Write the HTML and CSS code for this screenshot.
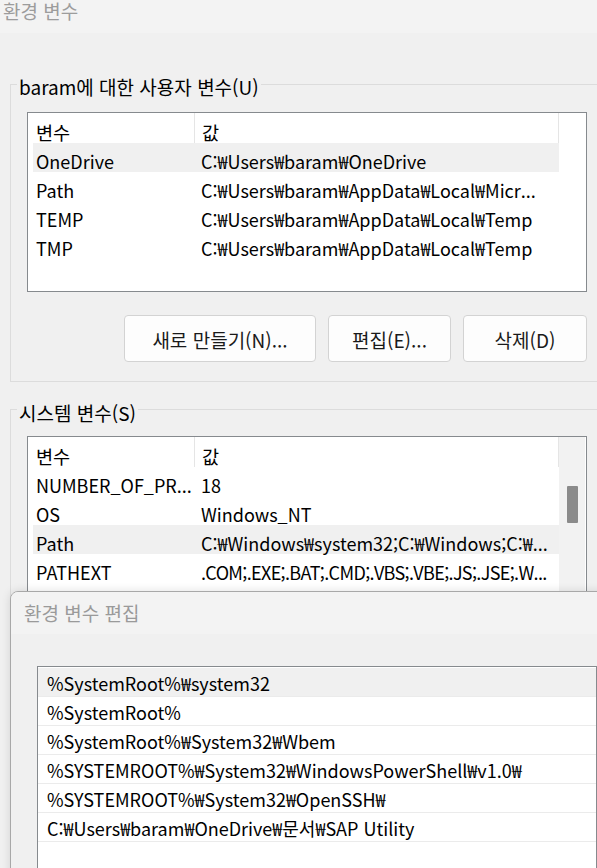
FILE: index.html
```html
<!DOCTYPE html>
<html lang="ko">
<head>
<meta charset="utf-8">
<title>환경 변수</title>
<link rel="stylesheet" href="styles.css">
</head>
<body>
<div class="window">
  <div class="titlebar">환경 변수</div>
  <div class="content">
    <fieldset class="group user">
      <legend>baram에 대한 사용자 변수(U)</legend>
      <div class="list">
        <div class="table">
          <div class="row head"><div class="c1">변수</div><div class="c2">값</div></div>
          <div class="row sel"><div class="c1">OneDrive</div><div class="c2">C:₩Users₩baram₩OneDrive</div></div>
          <div class="row"><div class="c1">Path</div><div class="c2">C:₩Users₩baram₩AppData₩Local₩Micr...</div></div>
          <div class="row"><div class="c1">TEMP</div><div class="c2">C:₩Users₩baram₩AppData₩Local₩Temp</div></div>
          <div class="row"><div class="c1">TMP</div><div class="c2">C:₩Users₩baram₩AppData₩Local₩Temp</div></div>
        </div>
        <div class="track"></div>
      </div>
      <div class="buttons">
        <button class="btn wide">새로 만들기(N)...</button>
        <button class="btn">편집(E)...</button>
        <button class="btn last">삭제(D)</button>
      </div>
    </fieldset>
    <fieldset class="group sys">
      <legend>시스템 변수(S)</legend>
      <div class="list list-sys">
        <div class="table">
          <div class="row head"><div class="c1">변수</div><div class="c2">값</div></div>
          <div class="row"><div class="c1">NUMBER_OF_PR...</div><div class="c2">18</div></div>
          <div class="row"><div class="c1">OS</div><div class="c2">Windows_NT</div></div>
          <div class="row sel"><div class="c1">Path</div><div class="c2">C:₩Windows₩system32;C:₩Windows;C:₩...</div></div>
          <div class="row"><div class="c1">PATHEXT</div><div class="c2 tight">.COM;.EXE;.BAT;.CMD;.VBS;.VBE;.JS;.JSE;.W...</div></div>
        </div>
        <div class="track"><div class="thumb"></div></div>
      </div>
    </fieldset>
  </div>
  <div class="dialog">
    <div class="dtitle">환경 변수 편집</div>
    <div class="dbody">
      <div class="dlist">
        <div class="drow sel"><div class="t">%SystemRoot%₩system32</div></div>
        <div class="drow"><div class="t">%SystemRoot%</div></div>
        <div class="drow"><div class="t">%SystemRoot%₩System32₩Wbem</div></div>
        <div class="drow"><div class="t">%SYSTEMROOT%₩System32₩WindowsPowerShell₩v1.0₩</div></div>
        <div class="drow"><div class="t">%SYSTEMROOT%₩System32₩OpenSSH₩</div></div>
        <div class="drow"><div class="t">C:₩Users₩baram₩OneDrive₩문서₩SAP Utility</div></div>
      </div>
    </div>
  </div>
</div>
</body>
</html>
```
FILE: styles.css
```css
* { box-sizing: border-box; }
html, body { margin: 0; padding: 0; }
body {
  width: 597px;
  height: 868px;
  overflow: hidden;
  background: #f0f0f0;
  font-family: "Noto Sans CJK KR", "Noto Sans", sans-serif;
  font-size: 18px;
  color: #000;
}
.window { position: relative; width: 597px; height: 868px; overflow: hidden; }
.titlebar {
  height: 33px;
  background: #f3f3f3;
  color: #9c9c9c;
  padding-left: 3px;
  font-size: 19px;
  line-height: 21px;
}
.content { padding-left: 10px; }
.group {
  margin: 36px 0 0 0;
  padding: 13px 10px 19px 0;
  border: 1px solid #dcdcdc;
  border-right: none;
  min-width: 0;
}
.group.sys { margin-top: 11px; }
.group.sys legend { padding-top: 8px; }
.group.sys .list { margin-top: -2px; }
.group legend {
  margin-left: 6px;
  padding: 6px 2px 0 2px;
  font-size: 19px;
  line-height: 24px;
}
.list {
  display: flex;
  margin-left: 16px;
  background: #fff;
  border: 1px solid #868a8e;
  height: 180px;
}
.list-sys { height: 170px; }
.table { margin-left: 5px; width: 526px; }
.track { width: 26px; }
.list-sys .track { background: #f2f2f2; padding: 49px 0 0 8px; }
.thumb { width: 11px; height: 37px; background: #8b8b8b; border-radius: 1px; }
.row { display: flex; height: 29px; padding-top: 4px; line-height: 29px; white-space: nowrap; }
.row.head { height: 30px; padding-top: 0; }
.head > div { padding-top: 4px; font-size: 18.6px; }
.c1 { width: 161px; padding-left: 3px; }
.c2 { width: 365px; padding-left: 7px; }
.c2.tight { letter-spacing: -0.65px; }
.head .c2 { border-left: 1px solid #e5e5e5; border-right: 1px solid #e5e5e5; }
.sel { background: #f0f0f0; }
.buttons { display: flex; justify-content: flex-end; gap: 12px; margin-top: 23px; }
.btn {
  width: 123px;
  height: 47px;
  background: #fdfdfd;
  border: 1px solid #d3d3d3;
  border-radius: 4px;
  font-family: inherit;
  font-size: 19px;
  color: #1a1a1a;
  padding: 2px 0 0 0;
}
.btn.wide { width: 192px; }
.btn.last { width: 124px; }
.dialog {
  position: absolute;
  left: 10px;
  top: 591px;
  width: 600px;
  height: 300px;
  background: #f0f0f0;
  border: 1px solid #a8a8a8;
  border-top-left-radius: 8px;
  box-shadow: 0 0 10px rgba(0, 0, 0, 0.12);
  overflow: hidden;
}
.dtitle {
  height: 42px;
  background: #f3f3f3;
  color: #9a9a9a;
  padding-left: 13px;
  font-size: 19px;
  line-height: 42px;
}
.dbody { padding: 32px 0 0 26px; }
.dlist {
  width: 560px;
  height: 240px;
  background: #fff;
  border: 1px solid #868a8e;
  padding-top: 1px;
}
.drow { height: 29px; border-bottom: 1px solid #ebebeb; padding-left: 5px; }
.drow .t { height: 28px; line-height: 30px; padding-left: 4px; white-space: nowrap; }
.drow.sel .t { background: #f0f0f0; }
```
